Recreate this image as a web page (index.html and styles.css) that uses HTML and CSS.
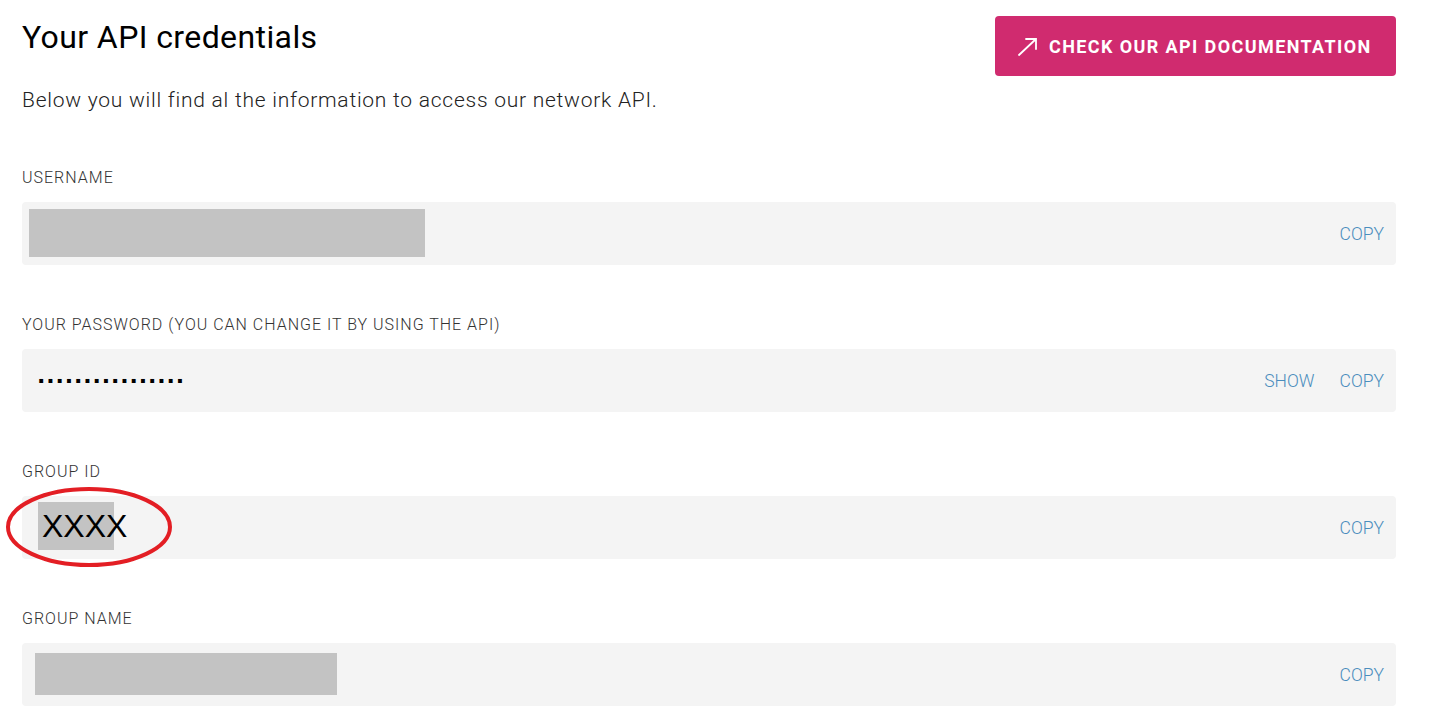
FILE: index.html
```html
<!DOCTYPE html>
<html lang="en">
<head>
<meta charset="utf-8">
<title>Your API credentials</title>
<link rel="stylesheet" href="styles.css">
</head>
<body>
<main class="page">
  <header class="header">
    <h1 class="title">Your API credentials</h1>
    <a class="doc-btn" href="#">
      <svg class="doc-icon" width="20" height="18" viewBox="0 0 20 18" aria-hidden="true">
        <path d="M1 17 L18 1 M8 1 H18 V11" fill="none" stroke="#fff" stroke-width="1.8" stroke-linecap="round" stroke-linejoin="miter"/>
      </svg>
      <span>CHECK OUR API DOCUMENTATION</span>
    </a>
  </header>
  <p class="intro">Below you will find al the information to access our network API.</p>

  <section class="cred first">
    <div class="label">USERNAME</div>
    <div class="field">
      <div class="value"><span class="redact redact-user"></span></div>
      <div class="actions"><a class="act" href="#">COPY</a></div>
    </div>
  </section>

  <section class="cred">
    <div class="label">YOUR PASSWORD (YOU CAN CHANGE IT BY USING THE API)</div>
    <div class="field">
      <div class="value"><span class="dots">................</span></div>
      <div class="actions"><a class="act" href="#">SHOW</a><a class="act" href="#">COPY</a></div>
    </div>
  </section>

  <section class="cred">
    <div class="label">GROUP ID</div>
    <div class="field">
      <div class="value"><span class="groupid">XXXX</span></div>
      <div class="actions"><a class="act" href="#">COPY</a></div>
      <svg class="circle" width="168" height="84" viewBox="0 0 168 84" aria-hidden="true">
        <ellipse cx="84" cy="41" rx="81" ry="38" fill="none" stroke="#e31e24" stroke-width="4"/>
      </svg>
    </div>
  </section>

  <section class="cred">
    <div class="label">GROUP NAME</div>
    <div class="field">
      <div class="value"><span class="redact redact-name"></span></div>
      <div class="actions"><a class="act" href="#">COPY</a></div>
    </div>
  </section>
</main>
</body>
</html>
```
FILE: styles.css
```css
* { box-sizing: border-box; }
html, body { margin: 0; padding: 0; background: #fff; }
body {
  font-family: Roboto, "Liberation Sans", Arial, sans-serif;
  color: #1a1a1a;
}
.page {
  padding: 16px 52px 0 22px;
}
.header {
  display: flex;
  justify-content: space-between;
  align-items: flex-start;
}
.title {
  margin: 1px 0 0 0;
  font-size: 32px;
  line-height: 40px;
  font-weight: 400;
  color: #000;
  letter-spacing: 0.4px;
}
.doc-btn {
  display: flex;
  align-items: center;
  gap: 11px;
  height: 60px;
  width: 401px;
  padding: 0 0 0 23px;
  background: #d02b6f;
  border-radius: 4px;
  color: #fff;
  text-decoration: none;
  font-weight: 700;
  font-size: 18px;
  letter-spacing: 1.4px;
}
.doc-icon { flex: none; margin-top: 1px; }
.intro {
  margin: 10px 0 0 0;
  font-size: 21px;
  line-height: 28px;
  font-weight: 300;
  letter-spacing: 0.75px;
  color: #222;
}
.cred { margin-top: 50px; }
.cred.first { margin-top: 54px; }
.label {
  font-size: 16px;
  line-height: 20px;
  font-weight: 300;
  letter-spacing: 1px;
  color: #333;
}
.field {
  position: relative;
  margin-top: 14px;
  height: 63px;
  border-radius: 4px;
  background: #f4f4f4;
  display: flex;
  align-items: center;
  justify-content: space-between;
  padding: 0 12px 0 0;
}
.value {
  display: flex;
  align-items: center;
}
.redact { display: block; background: #c3c3c3; }
.redact-user { width: 396px; height: 48px; margin-left: 7px; margin-top: -2px; }
.redact-name { width: 302px; height: 42px; margin-left: 13px; margin-top: -1px; }
.dots {
  margin-left: 15px;
  font-family: "DejaVu Sans", sans-serif;
  font-size: 22px;
  font-weight: 700;
  letter-spacing: 0.9px;
  line-height: 20px;
  color: #000;
  margin-top: -10px;
}
.groupid {
  display: block;
  margin-left: 16px;
  margin-top: -4px;
  width: 76px;
  height: 48px;
  background: #c3c3c3;
  padding-left: 4px;
  white-space: nowrap;
  font-family: "Liberation Sans", Arial, sans-serif;
  font-size: 32px;
  line-height: 48px;
  color: #000;
}
.actions {
  display: flex;
  gap: 25px;
}
.act {
  font-size: 17.5px;
  font-weight: 300;
  letter-spacing: 0;
  color: #4a8dbd;
  text-decoration: none;
}
.circle {
  position: absolute;
  left: -17px;
  top: -10px;
}
```
